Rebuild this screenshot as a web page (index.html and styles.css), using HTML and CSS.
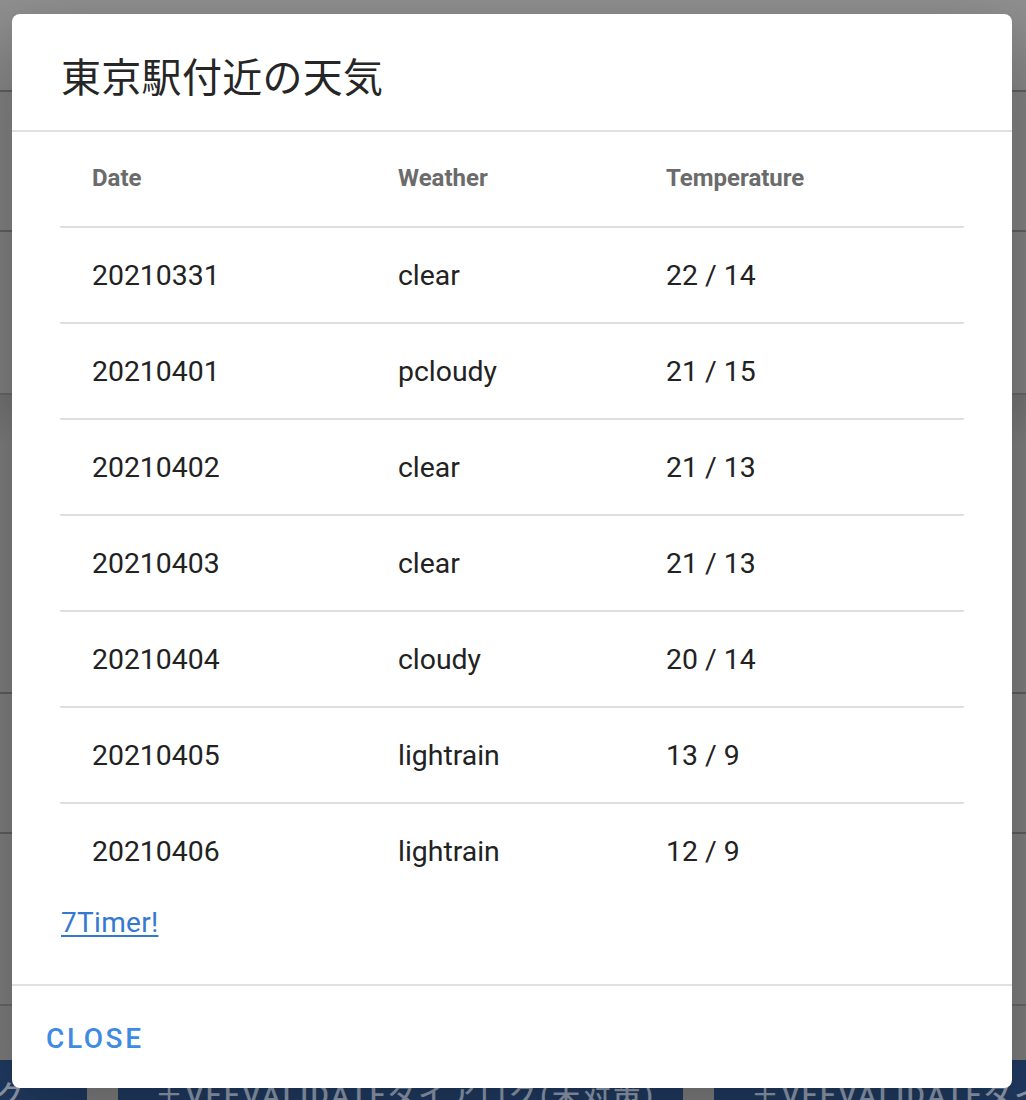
FILE: index.html
```html
<!DOCTYPE html>
<html lang="ja">
<head>
<meta charset="utf-8">
<title>東京駅付近の天気</title>
<link rel="stylesheet" href="styles.css">
</head>
<body>
<div class="page">
  <div class="band band-a"></div>
  <div class="band band-b"></div>
  <div class="band band-c"></div>
  <div class="band band-shadow"></div>
  <div class="band band-d"></div>
  <div class="band band-e"></div>
  <div class="band band-f"></div>
  <div class="band band-g"></div>
  <div class="btnbar">
    <div class="pbtn pbtn-first"><span>＋VEEVALIDATEダイアログ</span></div>
    <div class="pbtn"><span>＋VEEVALIDATEダイアログ(未対策)</span></div>
    <div class="pbtn"><span>＋VEEVALIDATEダイアログ(対策済)</span></div>
  </div>
</div>

<div class="dialog">
  <div class="title">東京駅付近の天気</div>
  <div class="divider"></div>
  <div class="content">
    <table class="wtable">
      <thead>
        <tr><th class="c1">Date</th><th class="c2">Weather</th><th class="c3">Temperature</th></tr>
      </thead>
      <tbody>
        <tr><td>20210331</td><td>clear</td><td>22 / 14</td></tr>
        <tr><td>20210401</td><td>pcloudy</td><td>21 / 15</td></tr>
        <tr><td>20210402</td><td>clear</td><td>21 / 13</td></tr>
        <tr><td>20210403</td><td>clear</td><td>21 / 13</td></tr>
        <tr><td>20210404</td><td>cloudy</td><td>20 / 14</td></tr>
        <tr><td>20210405</td><td>lightrain</td><td>13 / 9</td></tr>
        <tr><td>20210406</td><td>lightrain</td><td>12 / 9</td></tr>
      </tbody>
    </table>
    <a class="source" href="#">7Timer!</a>
  </div>
  <div class="divider"></div>
  <div class="actions">
    <button class="close">CLOSE</button>
  </div>
</div>
</body>
</html>
```
FILE: styles.css
```css
html, body {
  margin: 0;
  padding: 0;
}
body {
  width: 1026px;
  height: 1100px;
  overflow: hidden;
  font-family: Roboto, "Noto Sans CJK JP", sans-serif;
  background: #7e7e7e;
}
.page {
  display: flex;
  flex-direction: column;
  height: 1100px;
}
.band { flex: none; }
.band-a { height: 90px; background: linear-gradient(#909090, #868686); border-bottom: 2px solid #5f5f5f; }
.band-b { height: 138px; background: #818181; border-bottom: 2px solid #5f5f5f; }
.band-c { height: 161px; background: #7f7f7f; border-bottom: 2px solid #666; }
.band-shadow { height: 48px; background: linear-gradient(#727272, #7c7c7c); }
.band-d { height: 249px; background: #7d7d7d; border-bottom: 2px solid #5d5d5d; }
.band-e { height: 138px; background: #7d7d7d; border-bottom: 2px solid #5d5d5d; }
.band-f { height: 170px; background: #7d7d7d; border-bottom: 2px solid #666; }
.band-g { height: 54px; background: #7b7b7b; }
.btnbar {
  flex: 1;
  display: flex;
  gap: 31px;
  margin-left: -478px;
  overflow: hidden;
}
.pbtn {
  flex: none;
  width: 565px;
  background: #203a60;
  padding-left: 37px;
  box-sizing: border-box;
  color: #8e9aad;
  font-size: 28px;
  letter-spacing: 2.4px;
  font-weight: 500;
  white-space: nowrap;
  padding-top: 22px;
  line-height: 28px;
}
.pbtn-first {
  padding-left: 120px;
}
.dialog {
  position: absolute;
  left: 12px;
  top: 14px;
  width: 1000px;
  height: 1074px;
  background: #fff;
  border-radius: 8px;
  box-shadow: 0 22px 70px rgba(0,0,0,0.25);
  display: flex;
  flex-direction: column;
  overflow: hidden;
}
.title {
  padding: 29px 48px 23px 49px;
  font-family: "Noto Sans CJK JP", sans-serif;
  font-size: 40px;
  line-height: 64px;
  font-weight: 400;
  color: #262626;
  letter-spacing: 0.3px;
}
.divider {
  height: 2px;
  background: #e0e0e0;
  flex: none;
}
.content {
  flex: 1;
  padding: 0 48px;
}
.wtable {
  width: 904px;
  border-collapse: collapse;
  table-layout: fixed;
}
.wtable th, .wtable td {
  text-align: left;
  padding: 0 32px;
  height: 96px;
  box-sizing: border-box;
}
.wtable th {
  font-size: 24px;
  font-weight: 700;
  color: #6b6b6b;
  border-bottom: 2px solid #dfdfdf;
  height: 95px;
  padding-bottom: 2px;
}
.c1 { width: 306px; }
.c2 { width: 268px; }
.c3 { width: 330px; }
.wtable td {
  font-size: 28.4px;
  color: #222;
  border-bottom: 2px solid #dfdfdf;
}
.wtable tbody tr:last-child td {
  border-bottom: none;
}
.source {
  display: inline-block;
  margin-top: 3px;
  margin-left: 1px;
  font-size: 28px;
  line-height: 42px;
  color: #3379cf;
  text-decoration: underline;
  text-underline-offset: 3px;
  letter-spacing: 0.3px;
}
.actions {
  padding: 16px;
  height: 102px;
  box-sizing: border-box;
  display: flex;
  align-items: center;
}
.close {
  border: none;
  background: none;
  font-family: Roboto, sans-serif;
  font-size: 28px;
  font-weight: 500;
  letter-spacing: 2.6px;
  color: #3d8be2;
  padding: 0 18px;
  height: 72px;
  margin-top: 2px;
  cursor: pointer;
}
```
